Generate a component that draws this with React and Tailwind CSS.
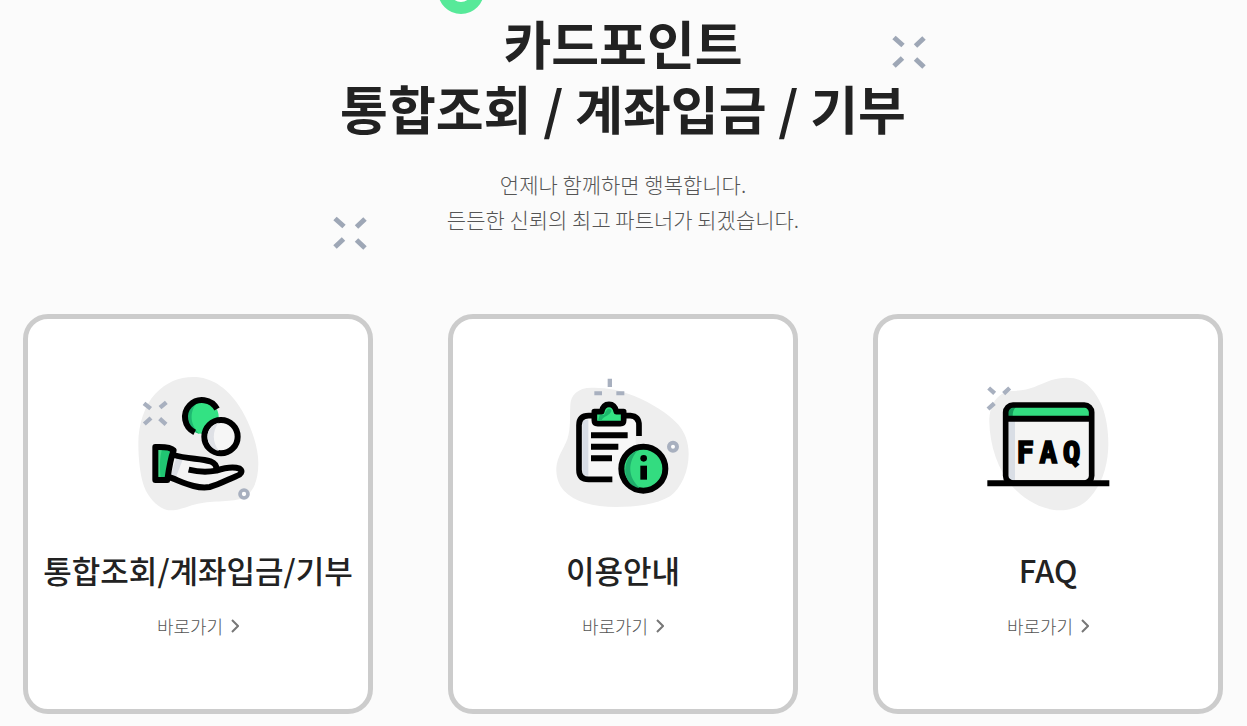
function Spark({ className }) {
  return (
    <svg viewBox="0 0 34 34" className={className} fill="none" stroke="#9ea7b6" strokeWidth="5" aria-hidden="true">
      <path d="M2 2.5l9 8M32 3l-8.500 8M2 31l8.500-8M32 32l-8.500-8" />
    </svg>
  );
}

function HandIcon() {
  return (
    <svg viewBox="-7 0 480 465" className="h-[155px] w-40" fill="none" aria-hidden="true">
      <path
        d="M219 36c55 0 97 32 129 75 35 47 66 125 66 184 0 50-14 87-46 104-28 12-91 8-135 17-31 6-52 20-83 20-28 0-57-28-73-58-17-33-23-95-23-143 0-57 19-115 51-149 33-34 70-50 114-50Z"
        fill="#eeeeee"
      />
      <g stroke="#a8b0bf" strokeWidth="13">
        <path d="M71 115l20 16M138 112l-19 16M72 177l20-18M137 178l-19-17" />
        <circle cx="371" cy="387" r="12" fill="#fff" strokeWidth="11" />
      </g>
      <circle cx="245" cy="156" r="50" fill="#33e283" />
      <path d="M237 107a52 52 0 0 0 1 100c-32-29-32-75-1-100Z" fill="#1fb871" />
      <path d="M223 202a51 51 0 1 1 67-70" stroke="#000" strokeWidth="18" />
      <circle cx="302" cy="215" r="50" fill="#f6f6f6" stroke="#000" strokeWidth="18" />
      <path d="M295 173c-24 7-33 24-33 42 0 20 12 37 34 43-20-27-21-59-1-85Z" fill="#dfe1e6" />
      <path
        d="M163 273c40 11 78 9 109 19 13 4 16 11 18 24 26-8 51-8 69-5 9 4 5 14-6 20-32 13-58 30-88 36-43 5-75-14-116-30Z"
        fill="#f4f4f4"
      />
      <path d="M168 278l20 4-22 56-16-5Z" fill="#dcdfe5" />
      <path d="M106 246c20 0 43 1 54 10-9 24-13 46-19 88h-35Z" fill="#20c672" />
      <path d="M113 250h13c-9 30-8 60-5 89h-12Z" fill="#42d987" />
      <g stroke="#000" strokeWidth="18" strokeLinejoin="round">
        <path d="M105 246c21-1 46 0 55 10-8 20-13 45-19 89h-36Z" />
        <path d="M160 270c39 12 84 10 110 19 12 5 19 11 18 23" />
        <path d="M205 314c29 7 54 8 83 3 27-9 50-13 70-6 11 8 3 18-9 22-29 12-56 27-81 33-43 7-82-16-125-31" />
      </g>
    </svg>
  );
}

function GuideIcon() {
  return (
    <svg viewBox="-7 0 480 465" className="h-[155px] w-40" fill="none" aria-hidden="true">
      <path
        d="M75 120c1-29 22-52 64-52 44-1 87 7 128 25 50 21 102 52 133 87 19 23 30 53 30 87 0 51-21 101-56 127-41 25-103 32-162 32-68 0-126-16-156-49-17-18-24-43-23-68 2-33 22-57 33-86 11-35 7-69 9-103Z"
        fill="#eeeeee"
      />
      <g fill="#a8b0bf">
        <path d="M187 41h13v25h-13ZM147 79h23v12h-23ZM213 79h24v12h-24Z" />
        <circle cx="383" cy="245" r="12" fill="#fff" stroke="#a8b0bf" strokeWidth="12" />
      </g>
      <path d="M101 152h170v192H101Z" fill="#f7f7f7" />
      <path d="M111 164h18v168h-18Z" fill="#d8dde5" />
      <path d="M201 343h-71q-29 0-29-29V181q0-29 29-29h16M238 152h17q26 2 26 29v32" stroke="#000" strokeWidth="17" />
      <path d="M147 140h22c3-16 11-22 22-22s19 7 22 22h22v26q0 10-10 10h-68q-10 0-10-10Z" fill="#33e283" stroke="#000" strokeWidth="17" strokeLinejoin="round" />
      <path d="M163 150h13c4-6 5-11 10-17 8-5 15 3 11 8-8 13-23 12-29 26h-10Z" fill="#1cb66c" />
      <path d="M137 211h110M137 245h82M137 280h63" stroke="#000" strokeWidth="18" />
      <circle cx="294" cy="311" r="66" fill="#33dc80" stroke="#000" strokeWidth="18" />
      <path d="M277 256c-40 13-51 80-16 105 8 5 15 8 22 8-37-33-36-78-6-113Z" fill="#1fae6b" />
      <circle cx="295" cy="280" r="10" fill="#000" />
      <path d="M285 302h20v42h-20Z" fill="#000" />
    </svg>
  );
}

function FaqIcon() {
  return (
    <svg viewBox="-7 0 480 465" className="h-[155px] w-40" aria-hidden="true">
      <path
        d="M57 170c0-51 23-87 66-92 56 0 77-17 119-32 22-8 48-10 69-6 40 8 66 42 83 81 14 34 20 76 20 117 0 52-14 107-44 146-28 38-61 51-101 52-54-1-102-29-139-67-48-52-72-131-73-199Z"
        fill="#eeeeee"
      />
      <path d="M55 69l18 16M118 69l-18 17M53 132l19-17" fill="none" stroke="#a8b0bf" strokeWidth="13" />
      <rect x="106" y="120" width="258" height="234" rx="22" fill="#f5f5f4" />
      <path d="M115 167h19v180h-19Z" fill="#d9dee5" />
      <path d="M113 126h244v29H113Z" fill="#33dc80" />
      <path d="M113 126h24c-8 7-10 16-10 29h-14Z" fill="#159b5b" />
      <rect x="106" y="120" width="258" height="234" rx="22" fill="none" stroke="#000" strokeWidth="17" />
      <path d="M106 161h258M51 355h366" stroke="#000" strokeWidth="18" />
      <g textAnchor="middle" className="font-['DejaVu_Sans_Mono',monospace] text-[88px] font-bold" stroke="#000" strokeWidth="5">
        <text x="165" y="294">F</text>
        <text x="234" y="294">A</text>
        <text x="304" y="294">Q</text>
      </g>
    </svg>
  );
}

const menus = [
  { title: "통합조회/계좌입금/기부", icon: HandIcon },
  { title: "이용안내", icon: GuideIcon },
  { title: "FAQ", icon: FaqIcon },
];

function MenuCard({ title, icon: Icon }) {
  return (
    <li className="flex h-[400px] flex-col items-center rounded-[25px] border-[5px] border-[#cccccc] bg-white pt-[46px]">
      <Icon />
      <h2 className="mt-[27px] text-[31px] leading-[46px] font-medium whitespace-nowrap text-[#222222]">{title}</h2>
      <a href="#" className="mt-[19px] flex items-center gap-2 text-[18px] leading-7 font-light text-[#555555]">
        바로가기
        <svg viewBox="0 0 8 14" className="h-[14px] w-2" fill="none" stroke="#777777" strokeWidth="2" aria-hidden="true">
          <path d="M1 1l6 6-6 6" />
        </svg>
      </a>
    </li>
  );
}

export default function App() {
  return (
    <main className="min-h-screen overflow-hidden bg-[#fbfbfb] pr-px pb-3 font-['Noto_Sans_CJK_KR',sans-serif]">
      <header className="relative mx-auto max-w-[1200px] pt-[10px] text-center">
        {/* Floating decorations */}
        <span className="absolute -top-8 left-1/2 -ml-[185px] size-[46px] rounded-full border-[12px] border-[#57e999] bg-white" />
        <Spark className="absolute top-[35px] left-1/2 ml-[269px] size-[34px]" />
        <Spark className="absolute top-[216px] left-1/2 -ml-[290px] size-[34px]" />

        <h1 className="text-[52px] leading-[65px] font-bold text-[#222222]">
          카드포인트
          <br />
          통합조회 / 계좌입금 / 기부
        </h1>
        <p className="mt-[27px] text-[21px] leading-[35px] font-light text-[#555555]">
          언제나 함께하면 행복합니다.
          <br />
          든든한 신뢰의 최고 파트너가 되겠습니다.
        </p>
      </header>

      <ul className="mx-auto mt-[77px] grid max-w-[1200px] grid-cols-3 gap-[75px]">
        {menus.map((menu) => (
          <MenuCard key={menu.title} {...menu} />
        ))}
      </ul>
    </main>
  );
}
